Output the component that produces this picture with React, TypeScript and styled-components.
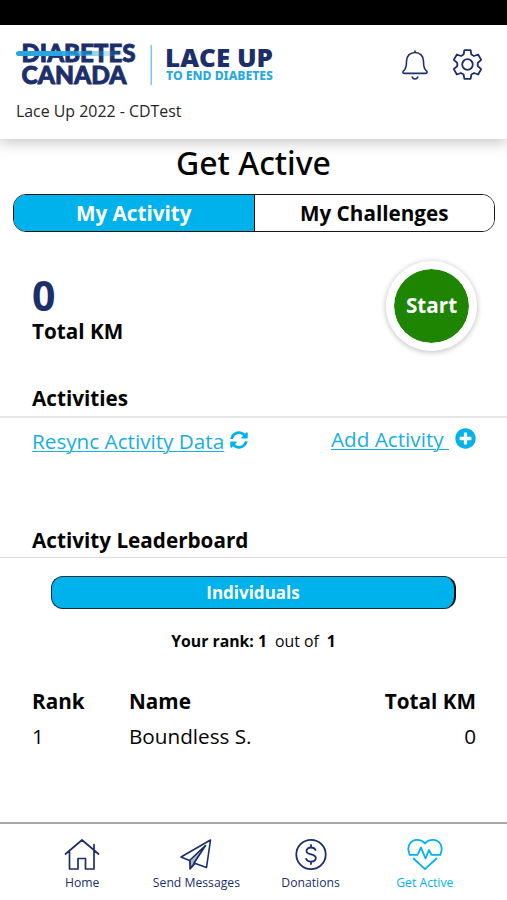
import React from "react";
import styled, { createGlobalStyle } from "styled-components";
import { FaPlusCircle, FaSyncAlt } from "react-icons/fa";

const NAVY = "#1c2f6b";
const CYAN = "#00b2ec";
const LINK = "#18aee0";

const GlobalStyle = createGlobalStyle`
  * { box-sizing: border-box; }
  body { margin: 0; background: #fff; }
  button { font: inherit; cursor: pointer; }
`;

const Screen = styled.div`
  display: flex;
  flex-direction: column;
  width: 507px;
  height: 900px;
  overflow: hidden;
  background: #fff;
  color: #050505;
  font-family: "Open Sans", "Noto Sans", sans-serif;
  font-size: 20.7px;
`;

const StatusBar = styled.div`
  flex: none;
  height: 25px;
  background: #000;
`;

const Header = styled.header`
  flex: none;
  height: 114px;
  padding: 14px 23px 0 15px;
  background: #fff;
  box-shadow: 0 2px 14px 1px rgba(0, 0, 0, 0.24);
`;

const HeaderRow = styled.div`
  display: flex;
  justify-content: space-between;
`;

const HeaderIcons = styled.div`
  display: flex;
  gap: 20px;
  padding-top: 9px;
`;

const Campaign = styled.div`
  margin: 12px 0 0 1px;
  font-size: 15.9px;
  line-height: 24px;
  color: #262626;
`;

const Main = styled.main`
  flex: 1;
  display: flex;
  flex-direction: column;
`;

const Title = styled.h1`
  margin: 4px 0 0;
  height: 51px;
  line-height: 40px;
  text-align: center;
  font-family: "Noto Sans", sans-serif;
  font-size: 32px;
  font-weight: 500;
`;

const Tabs = styled.div`
  flex: none;
  display: flex;
  height: 38px;
  margin: 0 12px 0 13px;
  border: 1.5px solid #151515;
  border-radius: 13px;
  overflow: hidden;
`;

const Tab = styled.button<{ $active?: boolean }>`
  flex: 1;
  padding: 0;
  border: 0;
  border-right: ${(p) => (p.$active ? "1px solid #111" : "0")};
  background: ${(p) => (p.$active ? CYAN : "#fff")};
  color: ${(p) => (p.$active ? "#fff" : "#050505")};
  font-weight: 700;
`;

const Summary = styled.section`
  flex: none;
  display: flex;
  justify-content: space-between;
  height: 152px;
  padding: 29px 30px 0 32px;
`;

const Total = styled.div`
  color: ${NAVY};
  font-size: 41px;
  font-weight: 700;
  line-height: 44px;
  margin-top: 12px;
`;

const TotalLabel = styled.div`
  font-weight: 700;
  line-height: 28px;
`;

const StartButton = styled.button`
  width: 91px;
  height: 90px;
  padding: 0 0 2px;
  border: 8px solid #fff;
  border-radius: 50%;
  background: #1d8502;
  background-clip: padding-box;
  box-shadow: 0 1px 5px 1px rgba(0, 0, 0, 0.2);
  color: #fff;
  font-weight: 700;
`;

const SectionHeading = styled.h2<{ $thin?: boolean }>`
  flex: none;
  height: ${(p) => (p.$thin ? 32 : 34)}px;
  margin: 0;
  padding-left: 32px;
  border-bottom: ${(p) => (p.$thin ? "1.5px solid #dadada" : "2px solid #e5e5e5")};
  font-size: 20.7px;
  font-weight: 700;
  line-height: 28px;
`;

const ActivityLinks = styled.div`
  flex: none;
  display: flex;
  justify-content: space-between;
  height: 108px;
  padding: 7px 31px 0 32px;
  color: ${CYAN};
`;

const LinkGroup = styled.div<{ $drop?: number; $gap: number }>`
  display: flex;
  align-items: center;
  gap: ${(p) => p.$gap}px;
  height: 28px;
  margin-top: ${(p) => p.$drop ?? 0}px;
  svg { position: relative; top: -1px; }
`;

const TextLink = styled.a`
  color: ${LINK};
  text-decoration: underline;
  text-decoration-thickness: 1px;
  text-underline-offset: 2px;
  white-space: pre;
`;

const Individuals = styled.button`
  flex: none;
  width: 405px;
  height: 33px;
  margin: 18px 0 0 51px;
  padding: 0;
  border: 1.5px solid #15323d;
  border-right: 2.5px solid #111;
  border-radius: 12px;
  background: ${CYAN};
  color: #fff;
  font-size: 17px;
  font-weight: 700;
`;

const RankLine = styled.div`
  display: flex;
  justify-content: center;
  gap: 8px;
  margin-top: 20px;
  font-size: 15.8px;
  line-height: 24px;
`;

const Board = styled.div`
  display: grid;
  grid-template-columns: 97px 1fr auto;
  grid-auto-rows: 35px;
  margin-top: 31px;
  padding: 0 31px 0 32px;
  line-height: 35px;
`;

const Cell = styled.div<{ $head?: boolean; $right?: boolean }>`
  font-weight: ${(p) => (p.$head ? 700 : 400)};
  text-align: ${(p) => (p.$right ? "right" : "left")};
`;

const Footer = styled.nav`
  flex: none;
  display: grid;
  grid-template-columns: repeat(4, 114.2px);
  justify-content: center;
  height: 78px;
  border-top: 2px solid #a8a8a8;
  background: #fff;
`;

const NavItem = styled.a<{ $active?: boolean }>`
  display: flex;
  flex-direction: column;
  align-items: center;
  padding-top: 14px;
  color: ${(p) => (p.$active ? CYAN : NAVY)};
  font-size: 12.2px;
  line-height: 18px;
  svg { margin-bottom: 2px; }
`;

const Logo = () => (
  <svg width="262" height="48" viewBox="0 0 262 48" overflow="visible">
    <defs>
      <linearGradient id="stroke" x1="0" x2="1">
        <stop offset="0.4" stopColor="#27a6e0" />
        <stop offset="1" stopColor="#27a6e0" stopOpacity="0.1" />
      </linearGradient>
    </defs>
    <g fill={NAVY} stroke={NAVY} strokeWidth="0.9" fontFamily="Lato, sans-serif" fontWeight="900">
      <text x="6.500" y="22.500" fontSize="24" textLength="114" lengthAdjust="spacingAndGlyphs">DIABETES</text>
      <text x="6.500" y="45" fontSize="24" textLength="105" lengthAdjust="spacingAndGlyphs">CANADA</text>
    </g>
    <rect x="1" y="12" width="106" height="5" rx="2.5" fill="url(#stroke)" />
    <rect x="135.500" y="6" width="1.500" height="40" fill="#7cc8e9" />
    <g fontWeight="800" lengthAdjust="spacingAndGlyphs">
      <text x="150" y="28" fill={NAVY} fontFamily="'Open Sans', sans-serif" fontSize="25.500" textLength="108" lengthAdjust="spacingAndGlyphs">LACE UP</text>
      <text x="151" y="41" fill="#27a9e5" fontFamily="'Noto Sans', sans-serif" fontSize="12" textLength="107" lengthAdjust="spacingAndGlyphs">TO END DIABETES</text>
    </g>
  </svg>
);

const BellIcon = () => (
  <svg width="32" height="34" viewBox="0 0 32 34" fill="none" stroke={NAVY} strokeWidth="1.6" strokeLinecap="round" strokeLinejoin="round">
    <path d="M15 3v1.500M15 4.500c-5 0-8.500 3.500-8.500 8.700 0 6-.8 8.300-3.100 9.800-.9.900-.5 2.400.8 2.400h21.600c1.300 0 1.700-1.500.8-2.400-2.300-1.500-3.100-3.800-3.100-9.800 0-5.200-3.500-8.700-8.500-8.700z" />
    <path d="M12.200 29c.8 2.700 4.800 2.700 5.600 0" />
  </svg>
);

const GearIcon = () => (
  <svg width="32" height="34" viewBox="0 0 32 34" fill="none" stroke={NAVY} strokeWidth="1.8" strokeLinejoin="round">
    <circle cx="15.500" cy="16.500" r="5.300" />
    <path d="M12.400 2.200h6.200l.8 4.300 2.600 1.500 4.100-1.500 3.100 5.400-3.300 2.800q-.5 1.800 0 3.600l3.300 2.800-3.100 5.400-4.100-1.500-2.600 1.500-.8 4.300h-6.200l-.8-4.300L9 25l-4.100 1.500-3.100-5.400 3.300-2.800q.5-1.800 0-3.600l-3.300-2.800 3.100-5.400L9 8l2.600-1.500z" />
  </svg>
);

const HomeIcon = () => (
  <svg width="36" height="34" viewBox="0 0 36 34" fill="none" stroke="currentColor" strokeWidth="1.7" strokeLinecap="round" strokeLinejoin="round">
    <path d="M1.500 16 18 2l16.500 14M5.500 13.500V31H14V20.500h7.500V31H30V12.500M30 11.500V6.500" />
  </svg>
);

const PlaneIcon = () => (
  <svg width="36" height="34" viewBox="0 0 36 34" fill="none" stroke="currentColor" strokeWidth="1.6" strokeLinecap="round" strokeLinejoin="round">
    <path d="M32.500 2 3 19l8.500 3.500L27.500 7.500 16 25 28.500 29.500zM12 23v8l5-5.500" />
    <path d="M27.500 7.500 11.500 22.500 13 29l3-4z" fill="currentColor" fillOpacity="0.35" strokeWidth="1" />
  </svg>
);

const DollarIcon = () => (
  <svg width="36" height="34" viewBox="0 0 36 34" fill="none" stroke="currentColor" strokeWidth="1.8" strokeLinecap="round">
    <circle cx="18" cy="16.500" r="14.700" />
    <path d="M22.500 12c-.7-1.700-2.300-2.500-4.500-2.500-2.700 0-4.500 1.300-4.500 3.400 0 4.700 9.300 2.300 9.300 7.200 0 2.200-1.900 3.500-4.800 3.500-2.500 0-4.300-1-4.900-2.800M18 7v2.500M18 23.600v2.500" />
  </svg>
);

const HeartIcon = () => (
  <svg width="36" height="34" viewBox="0 0 36 34" fill="none" stroke="currentColor" strokeWidth="1.8" strokeLinecap="round" strokeLinejoin="round">
    <path d="M2.500 16C-1 8 4 1.800 10 1.800c3.500 0 6.500 1.700 8 3.700 1.500-2 4.500-3.700 8-3.700 6 0 11 6.200 7.500 14.200" />
    <path d="M2.500 16.800h8L14 9.500 18.500 20.500 22 12l2.500 4.800h9M6.500 20.500 18 31.200 29.500 20.500" />
  </svg>
);

const NAV = [
  { label: "Home", Icon: HomeIcon },
  { label: "Send Messages", Icon: PlaneIcon },
  { label: "Donations", Icon: DollarIcon },
  { label: "Get Active", Icon: HeartIcon, active: true },
];

export default function App() {
  return (
    <Screen>
      <GlobalStyle />
      <StatusBar />
      <Header>
        <HeaderRow>
          <Logo />
          <HeaderIcons>
            <BellIcon />
            <GearIcon />
          </HeaderIcons>
        </HeaderRow>
        <Campaign>Lace Up 2022 - CDTest</Campaign>
      </Header>
      <Main>
        <Title>Get Active</Title>
        <Tabs>
          <Tab $active>My Activity</Tab>
          <Tab>My Challenges</Tab>
        </Tabs>
        <Summary>
          <div>
            <Total>0</Total>
            <TotalLabel>Total KM</TotalLabel>
          </div>
          <StartButton>Start</StartButton>
        </Summary>
        <SectionHeading>Activities</SectionHeading>
        <ActivityLinks>
          <LinkGroup $drop={2} $gap={6}>
            <TextLink>Resync Activity Data</TextLink>
            <FaSyncAlt size={18} />
          </LinkGroup>
          <LinkGroup $gap={6}>
            <TextLink>{"Add Activity "}</TextLink>
            <FaPlusCircle size={21} />
          </LinkGroup>
        </ActivityLinks>
        <SectionHeading $thin>Activity Leaderboard</SectionHeading>
        <Individuals>Individuals</Individuals>
        <RankLine>
          <b>Your rank: 1</b>
          <span>out of</span>
          <b>1</b>
        </RankLine>
        <Board>
          <Cell $head>Rank</Cell>
          <Cell $head>Name</Cell>
          <Cell $head $right>Total KM</Cell>
          <Cell>1</Cell>
          <Cell>Boundless S.</Cell>
          <Cell $right>0</Cell>
        </Board>
      </Main>
      <Footer>
        {NAV.map(({ label, Icon, active }) => (
          <NavItem key={label} $active={active}>
            <Icon />
            {label}
          </NavItem>
        ))}
      </Footer>
    </Screen>
  );
}
